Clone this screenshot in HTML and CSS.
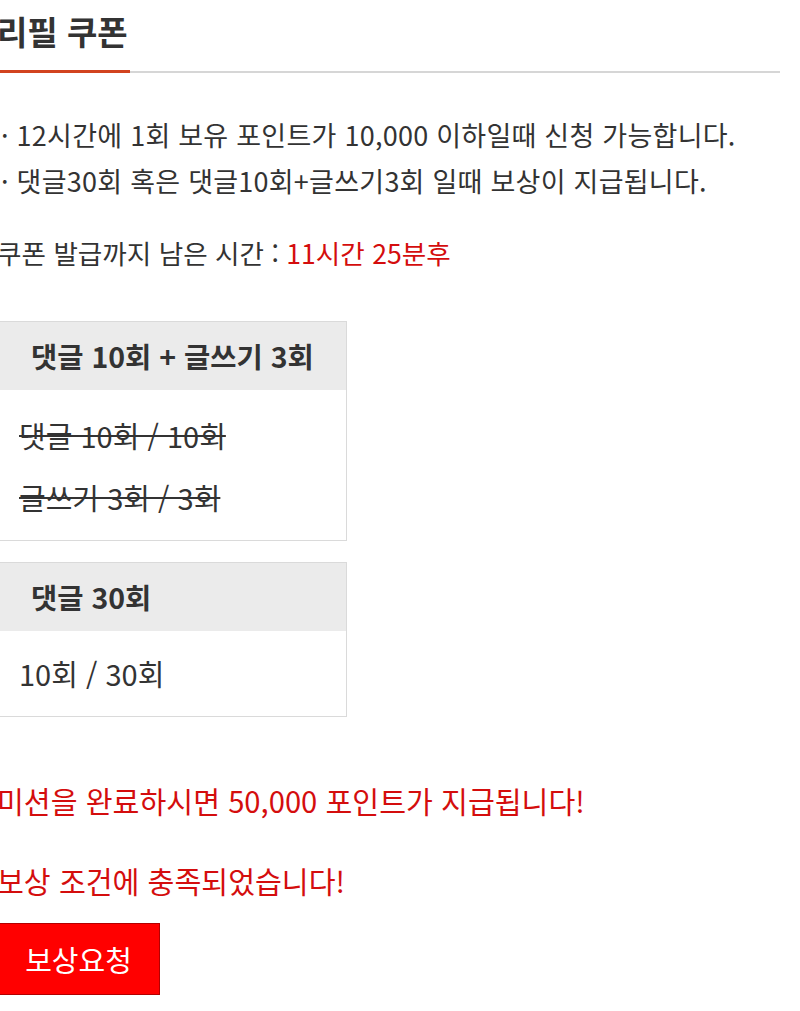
FILE: index.html
```html
<!DOCTYPE html>
<html lang="ko">
  <head>
    <meta charset="UTF-8" />
    <meta name="viewport" content="width=device-width, initial-scale=1.0" />
    <title>리필 쿠폰</title>
    <link rel="stylesheet" href="styles.css">
  </head>
  <body>
    <div class="page">
      <!-- 탭 제목 -->
      <div class="tab">
        <h2 class="tab-title">리필 쿠폰</h2>
      </div>

      <!-- 안내 -->
      <ul class="notice">
        <li>· 12시간에 1회 보유 포인트가 10,000 이하일때 신청 가능합니다.</li>
        <li>· 댓글30회 혹은 댓글10회+글쓰기3회 일때 보상이 지급됩니다.</li>
      </ul>

      <p class="remain">쿠폰 발급까지 남은 시간 : <span class="red">11시간 25분후</span></p>

      <!-- 미션 -->
      <div class="mission-list">
        <div class="mission">
          <div class="mission-head">댓글 10회 + 글쓰기 3회</div>
          <div class="mission-body">
            <p class="done">댓글 10회 / 10회</p>
            <p class="done">글쓰기 3회 / 3회</p>
          </div>
        </div>

        <div class="mission">
          <div class="mission-head">댓글 30회</div>
          <div class="mission-body single">
            <p>10회 / 30회</p>
          </div>
        </div>
      </div>

      <p class="msg first">미션을 완료하시면 50,000 포인트가 지급됩니다!</p>
      <p class="msg">보상 조건에 충족되었습니다!</p>

      <button class="btn-reward" type="button">보상요청</button>
    </div>
  </body>
</html>
```

FILE: styles.css
```css
body {
  margin: 0;
  padding: 0;
  background: #fff;
  color: #333;
  font-family: 'Noto Sans CJK KR', 'Noto Sans', sans-serif;
  overflow: hidden;
}

p {
  margin: 0;
}

.page {
  width: 783px;
  margin-left: -3px;
}

/* 탭 */
.tab {
  border-bottom: 2px solid #d6d6d6;
}

.tab-title {
  width: 133px;
  margin: 11px 0 -2px;
  padding-bottom: 19px;
  border-bottom: 3px solid #d2431f;
  font-size: 33px;
  line-height: 40px;
  font-weight: bold;
  color: #333;
  white-space: nowrap;
}

/* 안내 */
.notice {
  list-style: none;
  margin: 39px 0 0;
  padding: 0 0 0 4px;
  font-size: 27px;
  line-height: 46px;
  letter-spacing: 0.25px;
}

.remain {
  margin-top: 26px;
  font-size: 26.6px;
  line-height: 46px;
}

.red {
  color: #d40d0d;
}

/* 미션 박스 */
.mission-list {
  display: flex;
  flex-direction: column;
  gap: 21px;
  margin-top: 45px;
}

.mission {
  width: 365px;
  margin-left: -17px;
  border: 1px solid #dadada;
  background: #fff;
}

.mission-head {
  height: 68px;
  padding-left: 50px;
  background: #ebebeb;
  font-size: 28.5px;
  font-weight: bold;
  line-height: 68px;
}

.mission-body {
  padding: 14px 0 12px 38px;
  font-size: 29px;
  line-height: 62px;
}

.mission-body.single {
  padding: 11px 0 12px 38px;
}

.done {
  text-decoration: line-through;
}

/* 메시지 */
.msg {
  margin-top: 34px;
  font-size: 29.2px;
  line-height: 46px;
  color: #d40d0d;
}

.msg.first {
  margin-top: 60px;
}

.btn-reward {
  display: block;
  width: 163px;
  height: 72px;
  margin-top: 20px;
  border: 1px solid #b30000;
  background: #f00;
  color: #fff;
  font-family: inherit;
  font-size: 29px;
  padding: 0;
}
```
